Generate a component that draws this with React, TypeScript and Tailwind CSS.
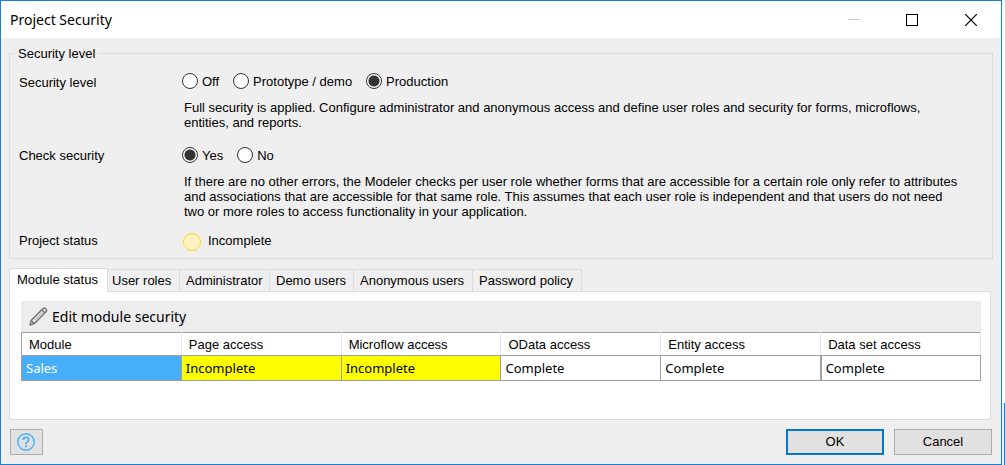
import { useState } from 'react';

const sans = "font-['Liberation_Sans',Arial,sans-serif]";

const tabs = ['Module status', 'User roles', 'Administrator', 'Demo users', 'Anonymous users', 'Password policy'];
const tabWidths = ['w-[99px]', 'w-[72px]', 'w-[90px]', 'w-[84px]', 'w-[119px]', 'w-[109px]'];

const columns = [
  { name: 'Module', value: 'Sales' },
  { name: 'Page access', value: 'Incomplete' },
  { name: 'Microflow access', value: 'Incomplete' },
  { name: 'OData access', value: 'Complete' },
  { name: 'Entity access', value: 'Complete' },
  { name: 'Data set access', value: 'Complete' },
];

function cellColor(value: string) {
  if (value === 'Incomplete') return 'bg-[#ffff00] text-black';
  if (value === 'Sales') return 'bg-[#47aef9] text-white';
  return 'bg-white text-black';
}

type RadioProps = { name: string; label: string; checked: boolean; onSelect: () => void };

function Radio({ name, label, checked, onSelect }: RadioProps) {
  return (
    <label className="flex h-4 items-center gap-1 whitespace-nowrap">
      <input
        type="radio"
        name={name}
        checked={checked}
        onChange={onSelect}
        className="size-4 shrink-0 appearance-none rounded-full border border-[#333333] bg-white checked:bg-[radial-gradient(circle,#333333_5px,#ffffff_6px)]"
      />
      {label}
    </label>
  );
}

export default function App() {
  const [level, setLevel] = useState('Production');
  const [check, setCheck] = useState('Yes');
  const [tab, setTab] = useState('Module status');

  return (
    <div className="flex min-h-screen bg-white">
      <main className={`${sans} flex flex-1 flex-col border border-[#1a7fd4] bg-[#efefef] text-[13px] leading-[15px] text-black`}>
        <header className="flex h-[37px] items-center justify-between bg-white">
          <h1 className="pl-[9px] font-['Noto_Sans',sans-serif] text-[14px] leading-5">Project Security</h1>
          <div className="flex">
            <button aria-label="Minimize" disabled className="flex h-9 w-[58px] items-center justify-center">
              <svg width="12" height="12" viewBox="0 0 12 12" shapeRendering="crispEdges"><path d="M0 5.5h12" stroke="#c8c8c8" /></svg>
            </button>
            <button aria-label="Maximize" className="flex h-9 w-[58px] items-center justify-center">
              <svg width="12" height="12" viewBox="0 0 12 12" shapeRendering="crispEdges"><rect x=".5" y=".5" width="11" height="11" fill="none" stroke="#000" /></svg>
            </button>
            <button aria-label="Close" className="flex h-9 w-[60px] items-center justify-center">
              <svg width="12" height="12" viewBox="0 0 12 12"><path d="M0 0l12 12M12 0L0 12" stroke="#000" strokeWidth="1.2" /></svg>
            </button>
          </div>
        </header>

        <fieldset className="mx-2 mt-2 h-[213px] border border-[#dcdcdc] px-[9px]">
          <legend className="-ml-1 px-[3px]">Security level</legend>
          <div className="grid grid-cols-[163px_1fr]">
            <div className="pt-3.5">Security level</div>
            <div className="pt-3">
              <div className="flex gap-3.5">
                <Radio name="level" label="Off" checked={level === 'Off'} onSelect={() => setLevel('Off')} />
                <Radio name="level" label="Prototype / demo" checked={level === 'Prototype'} onSelect={() => setLevel('Prototype')} />
                <Radio name="level" label="Production" checked={level === 'Production'} onSelect={() => setLevel('Production')} />
              </div>
              <p className="mt-[11px] pl-0.5">
                Full security is applied. Configure administrator and anonymous access and define user roles and security for forms, microflows,
                <br />
                entities, and reports.
              </p>
            </div>
            <div className="pt-[18px]">Check security</div>
            <div className="pt-[17px]">
              <div className="flex gap-3.5">
                <Radio name="check" label="Yes" checked={check === 'Yes'} onSelect={() => setCheck('Yes')} />
                <Radio name="check" label="No" checked={check === 'No'} onSelect={() => setCheck('No')} />
              </div>
              <p className="mt-[11px] pl-0.5">
                If there are no other errors, the Modeler checks per user role whether forms that are accessible for a certain role only refer to attributes
                <br />
                and associations that are accessible for that same role. This assumes that each user role is independent and that users do not need
                <br />
                two or more roles to access functionality in your application.
              </p>
            </div>
            <div className="pt-3.5">Project status</div>
            <div className="flex items-start gap-[7px] pt-3.5 pl-px">
              <span className="size-[18px] rounded-full border border-[#f9dc27] bg-[#fff2c0]" />
              Incomplete
            </div>
          </div>
        </fieldset>

        <div className="mx-2 mt-[9px] flex items-end" role="tablist">
          {tabs.map((name, i) => (
            <button
              key={name}
              role="tab"
              aria-selected={tab === name}
              onClick={() => setTab(name)}
              className={`${tabWidths[i]} shrink-0 whitespace-nowrap border-[#dcdcdc] text-left ${
                tab === name ? 'z-10 -mb-px h-6 border-x border-t bg-white pb-0.5 pl-[7px]' : `h-[22px] border-t border-r ${i === 1 ? 'pl-1' : 'pl-1.5'}`
              }`}
            >
              {name}
            </button>
          ))}
        </div>
        <section className="mr-2.5 ml-2 flex-1 border border-[#dcdcdc] bg-white px-[9px] pt-[9px] pl-[11px]">
          <div className="flex h-[31px] items-center bg-[#ededed] pl-2">
            <button className="flex items-center gap-[3px] font-['Noto_Sans',sans-serif] text-[14px] leading-5">
              <svg width="20" height="20" viewBox="0 0 20 20" fill="none" stroke="#707070" strokeWidth="1.4" strokeLinejoin="round">
                <path d="M1 18L2.200 13.400L14 1.600Q15.400.500 16.700 1.700Q18.200 3.200 17.200 4.600L5.400 16.400ZM13 3L15.800 5.800M2.200 13.400L5.400 16.400" />
                <path d="M13.500 5.200L6 12.700" strokeWidth=".7" />
              </svg>
              Edit module security
            </button>
          </div>
          <table className="w-full table-fixed border-collapse border border-[#a0a0a0] text-left">
            <thead>
              <tr className="h-[23px]">
                {columns.map((c) => (
                  <th key={c.name} className="border-r border-b border-r-[#e5e5e5] border-b-[#a0a0a0] pl-[7px] font-normal">{c.name}</th>
                ))}
              </tr>
            </thead>
            <tbody>
              <tr className="h-[25px] font-['Noto_Sans',sans-serif]">
                {columns.map((c) => (
                  <td key={c.name} className={`border border-[#a0a0a0] pl-1 last:border-l-2 ${cellColor(c.value)}`}>{c.value}</td>
                ))}
              </tr>
            </tbody>
          </table>
        </section>

        <footer className="flex h-[44px] items-start justify-between px-[9px] pt-[9px]">
          <button aria-label="Help" className="flex h-[26px] w-[33px] items-center border border-[#adadad] bg-[#e1e1e1] pl-1.5">
            <svg width="18" height="18" viewBox="0 0 18 18" fill="none" stroke="#47aef9" strokeWidth="1.4">
              <circle cx="9" cy="9" r="8.2" />
              <path d="M6.3 7q0-2.600 2.700-2.600t2.700 2.300q0 1.300-1.400 2.200T9 11.200" strokeWidth="1.7" />
              <path d="M9 12.500v1.800" strokeWidth="1.9" />
            </svg>
          </button>
          <div className="flex gap-2.5">
            <button className="h-[26px] w-[98px] border-2 border-[#0078d7] bg-[#e1e1e1] pb-0.5">OK</button>
            <button className="h-[26px] w-[98px] border border-[#adadad] bg-[#e1e1e1] pb-0.5">Cancel</button>
          </div>
        </footer>
      </main>
      <div className="flex w-[3px] flex-col justify-end" aria-hidden="true">
        <div className="h-[62px] border-r border-[#1a7fd4] bg-[#efefef]" />
      </div>
    </div>
  );
}
